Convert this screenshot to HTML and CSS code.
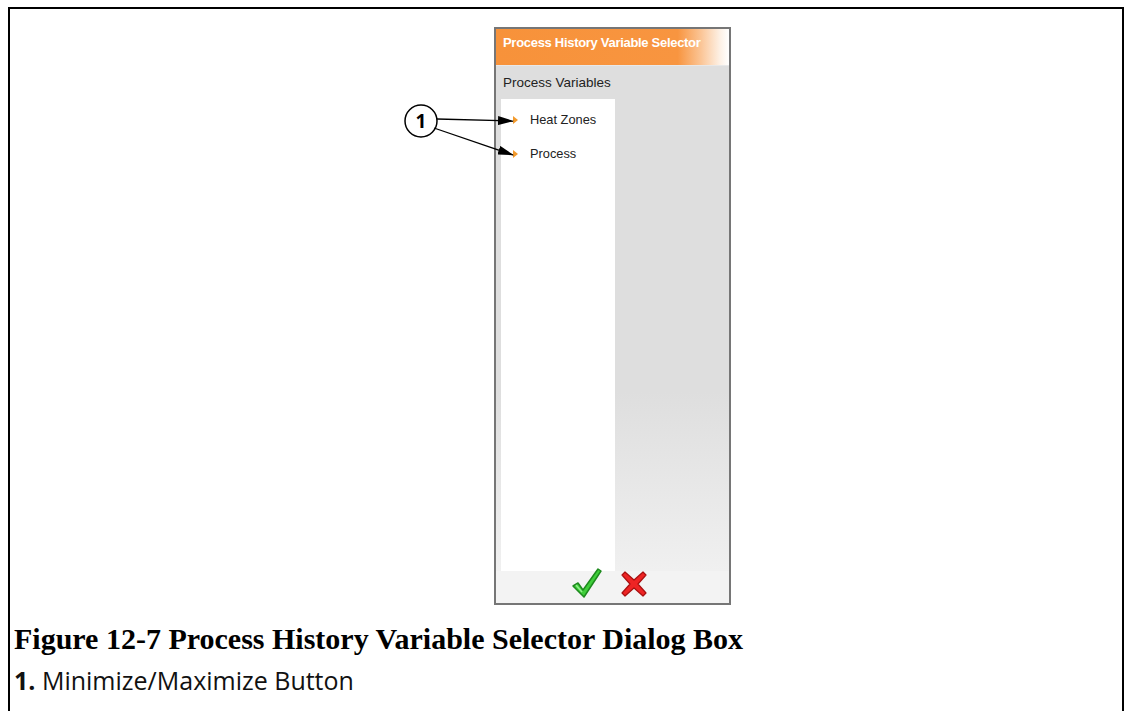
FILE: index.html
```html
<!DOCTYPE html>
<html lang="en">
<head>
    <meta charset="UTF-8">
    <meta name="viewport" content="width=device-width, initial-scale=1.0">
    <title>Process History Variable Selector</title>
    <link rel="stylesheet" href="styles.css">
</head>
<body>

    <div class="frame">
        <div class="figure">
            <div class="dialog">
                <div class="title">Process History Variable Selector</div>
                <div class="section-head">Process Variables</div>
                <div class="body">
                    <ul class="list">
                        <li><span class="tri"></span>Heat Zones</li>
                        <li><span class="tri"></span>Process</li>
                    </ul>
                    <div class="side"></div>
                </div>
                <div class="footer">
                    <svg class="ok" width="32" height="32" viewBox="0 0 32 32">
                        <path d="M2 19 L7 16 L12 23 L27 2 L30 4 L13 30 Z" fill="#3fce3a" stroke="#1e8a1e" stroke-width="1.5" stroke-linejoin="round"/>
                        <path d="M5 18 L11 25" stroke="#8ff08a" stroke-width="1.5" fill="none"/>
                    </svg>
                    <svg class="cancel" width="26" height="26" viewBox="0 0 26 26">
                        <path d="M4 1 L13 9 L22 1 L25 4 L17 13 L25 22 L22 25 L13 17 L4 25 L1 22 L9 13 L1 4 Z" fill="#ee2424" stroke="#a80f0f" stroke-width="1.2" stroke-linejoin="round"/>
                    </svg>
                </div>
            </div>

            <!-- callout 1 -->
            <svg class="callout" width="140" height="75" viewBox="0 0 140 75">
                <defs>
                    <marker id="head" markerWidth="16" markerHeight="9" refX="15" refY="4.5" orient="auto" markerUnits="userSpaceOnUse">
                        <path d="M0 0 L16 4.5 L0 9 Z" fill="#000"/>
                    </marker>
                </defs>
                <circle cx="31" cy="26" r="16" fill="#fff" stroke="#000" stroke-width="1.5"/>
                <text x="31" y="33" text-anchor="middle" class="callout-num">1</text>
                <line x1="47" y1="24" x2="123" y2="26" stroke="#000" stroke-width="1.3" marker-end="url(#head)"/>
                <line x1="44" y1="33" x2="123" y2="60" stroke="#000" stroke-width="1.3" marker-end="url(#head)"/>
            </svg>
        </div>

        <h2 class="caption">Figure 12-7 Process History Variable Selector Dialog Box</h2>
        <p class="legend"><b>1.</b> Minimize/Maximize Button</p>
    </div>

</body>
</html>
```

FILE: styles.css
```css
body {
    margin: 0;
    background: #fff;
    font-family: "Liberation Sans", Arial, sans-serif;
}
.frame {
    position: relative;
    margin: 7px 3px 0 8px;
    height: 720px;
    border: 2px solid #000;
    border-bottom: none;
}
.figure {
    position: relative;
    padding-top: 18px;
}
.dialog {
    margin-left: 484px;
    width: 237px;
    height: 578px;
    box-sizing: border-box;
    border: 2px solid #767676;
    background: #dedede;
    display: flex;
    flex-direction: column;
}
.title {
    height: 36px;
    flex: none;
    padding-left: 7px;
    line-height: 28px;
    color: #fff;
    font-size: 13px;
    font-weight: bold;
    letter-spacing: -0.3px;
    white-space: nowrap;
    background: linear-gradient(to right, #f7923a 0%, #f89540 78%, #fbc596 88%, #fdf0e4 96%, #fff 100%);
    border-bottom: 1px solid #e8e8e8;
}
.section-head {
    height: 33px;
    flex: none;
    padding-left: 7px;
    line-height: 33px;
    font-size: 13.5px;
    color: #222;
}
.body {
    flex: 1;
    display: flex;
    background: linear-gradient(to bottom, #dedede 0%, #dedede 62%, #f0f0f0 100%);
}
.list {
    list-style: none;
    margin: 0 0 0 5px;
    padding: 9px 0 0 0;
    width: 114px;
    background: #fff;
    font-size: 12.8px;
    color: #222;
}
.list li {
    height: 34px;
    line-height: 24px;
    padding-left: 12px;
    display: flex;
    align-items: flex-start;
}
.tri {
    width: 0;
    height: 0;
    margin: 8px 12px 0 0;
    border-left: 5px solid #f39a2c;
    border-top: 4px solid transparent;
    border-bottom: 4px solid transparent;
}
.side {
    flex: 1;
}
.footer {
    height: 28px;
    flex: none;
    background: #f3f3f3;
    display: flex;
    justify-content: center;
    align-items: flex-end;
    gap: 18px;
    padding-bottom: 4px;
    padding-right: 8px;
}
.ok {
    margin-top: -6px;
}
.cancel {
    margin-bottom: 2px;
}
.callout {
    position: absolute;
    left: 380px;
    top: 86px;
}
.callout-num {
    font-family: "Open Sans", sans-serif;
    font-weight: bold;
    font-size: 19px;
}
.caption {
    margin: 16px 0 0 4px;
    font-family: "Liberation Serif", "Times New Roman", serif;
    font-size: 30px;
    line-height: 36px;
    font-weight: bold;
    color: #000;
}
.legend {
    margin: 6px 0 0 4px;
    font-family: "Open Sans", sans-serif;
    font-size: 25px;
    line-height: 34px;
    color: #111;
}
```
